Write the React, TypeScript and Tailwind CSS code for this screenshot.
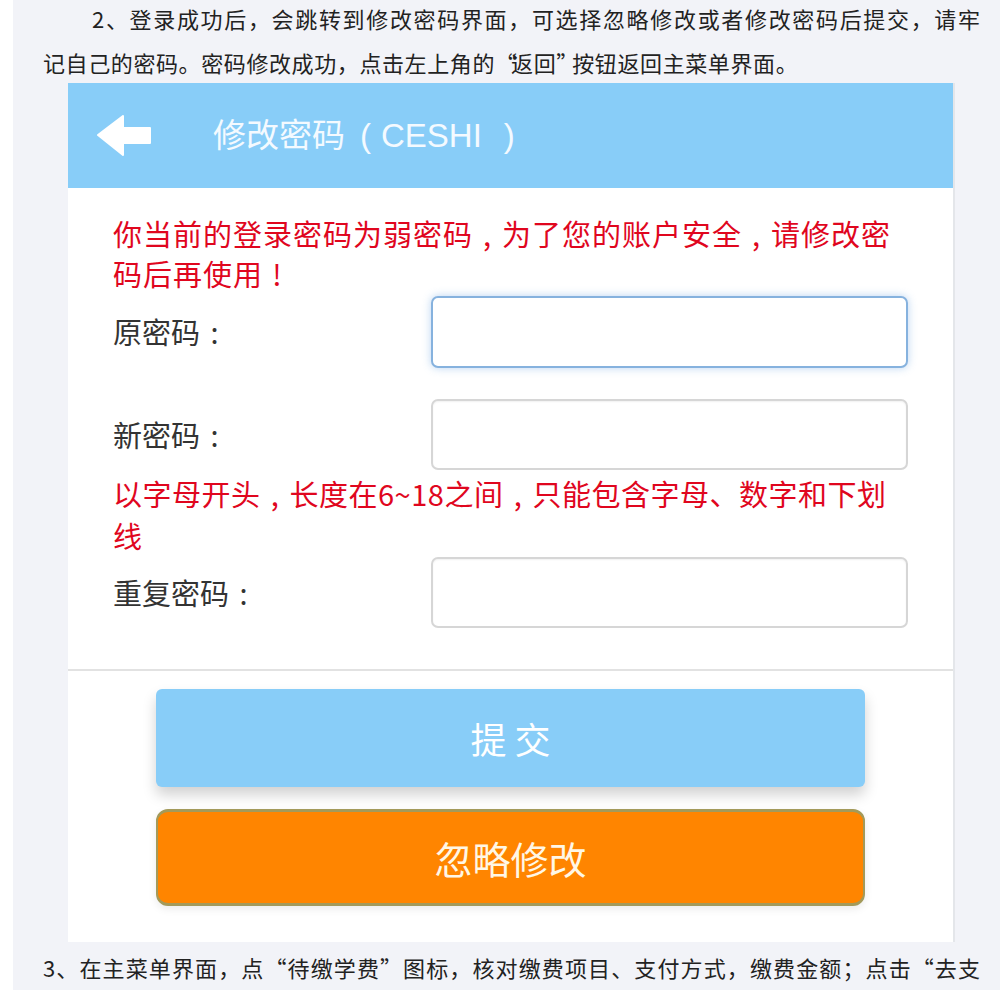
import React from "react";

const cjk = { fontFamily: '"Noto Sans CJK SC", "Liberation Sans", sans-serif' };

function Arrow() {
  return (
    <svg width="56" height="42" viewBox="0 0 56 42" className="block">
      <path
        d="M2 20 L27 1 L27 13 L54 13 L54 28 L27 28 L27 40 Z"
        fill="#ffffff"
        stroke="#ffffff"
        strokeWidth="2"
        strokeLinejoin="round"
      />
    </svg>
  );
}

function P({ c }: { c: string }) {
  return <span className="inline-block w-[1em] text-center">{c}</span>;
}

function Row({ label, focused }: { label: string; focused?: boolean }) {
  return (
    <div className="flex items-center">
      <div className="w-[318px] text-[29px] text-[#333]">
        {label}
        <P c=":" />
      </div>
      <div
        className={
          focused
            ? "w-[477px] h-[72px] rounded-[7px] border-2 border-[#86b2de] bg-white shadow-[0_0_8px_rgba(102,160,225,0.45)]"
            : "w-[477px] h-[71px] rounded-[7px] border-2 border-[#d6d6d6] bg-white shadow-[inset_0_1px_2px_rgba(0,0,0,0.06)]"
        }
      />
    </div>
  );
}

export default function App() {
  return (
    <div
      className="w-[1000px] h-[990px] overflow-hidden bg-[#f2f3f8] border-l-[13px] border-white text-[#222]"
      style={cjk}
    >
      <div className="pl-[30px] pr-[20px]">
        <p className="h-[36px] leading-[36px] text-[22px] pl-[49px] text-justify [text-align-last:justify] whitespace-nowrap">
          2、登录成功后，会跳转到修改密码界面，可选择忽略修改或者修改密码后提交，请牢
        </p>
        <p className="mt-[8px] h-[36px] leading-[36px] text-[22px] tracking-[0.6px] whitespace-nowrap">
          记自己的密码。密码修改成功，点击左上角的<span className="tracking-[-6px]">“</span>返回<span className="tracking-[-6px]">”</span>按钮返回主菜单界面。
        </p>
      </div>

      <div className="mt-[3px] ml-[55px] w-[887px] h-[859px] bg-white border-r-2 border-[#e4e6ea] flex flex-col">
        <div className="h-[105px] bg-[#88cdf8] flex items-center pl-[28px]">
          <Arrow />
          <div
            className="ml-[61px] text-[33px] text-[#f4faff] whitespace-nowrap flex items-center"
            style={{ fontFamily: '"Liberation Sans", "Noto Sans CJK SC", sans-serif' }}
          >
            <span>修改密码</span>
            <span className="ml-[15px] font-light">(</span>
            <span className="ml-[10px]">CESHI</span>
            <span className="ml-[22px] font-light">)</span>
          </div>
        </div>

        <div className="pl-[45px] pt-[25px]">
          <p className="text-[29px] leading-[40px] tracking-[1px] text-[#e0061e] whitespace-nowrap">
            你当前的登录密码为弱密码<P c="," />为了您的账户安全<P c="," />请修改密
            <br />
            码后再使用<P c="!" />
          </p>
          <div className="mt-[3px]">
            <Row label="原密码" focused />
          </div>
          <div className="mt-[31px]">
            <Row label="新密码" />
          </div>
          <p className="mt-[2px] text-[29px] leading-[42px] tracking-[0.5px] text-[#e0061e] whitespace-nowrap">
            以字母开头<P c="," />长度在6~18之间<P c="," />只能包含字母、数字和下划
            <br />
            线
          </p>
          <div className="mt-[1px]">
            <Row label="重复密码" />
          </div>
        </div>

        <div className="mt-[41px] h-[2px] bg-[#e2e2e2]" />

        <div className="flex flex-col items-center">
          <button className="mt-[18px] w-[709px] h-[98px] rounded-[6px] bg-[#88cdf8] text-white text-[36px] shadow-[0_8px_14px_rgba(0,0,0,0.18)]">
            提 交
          </button>
          <button className="mt-[22px] w-[709px] h-[97px] rounded-[12px] bg-[#ff8500] border-t-[3px] border-b-[3px] border-x-2 border-[#a39a5a] text-[#fff7e6] text-[38px] shadow-[0_3px_8px_rgba(0,0,0,0.08)]">
            忽略修改
          </button>
        </div>
      </div>

      <div className="pl-[30px] pr-[20px]">
        <p className="mt-[7px] h-[36px] leading-[36px] text-[22px] text-justify [text-align-last:justify] whitespace-nowrap">
          3、在主菜单界面，点“待缴学费”图标，核对缴费项目、支付方式，缴费金额；点击“去支
        </p>
      </div>
    </div>
  );
}
